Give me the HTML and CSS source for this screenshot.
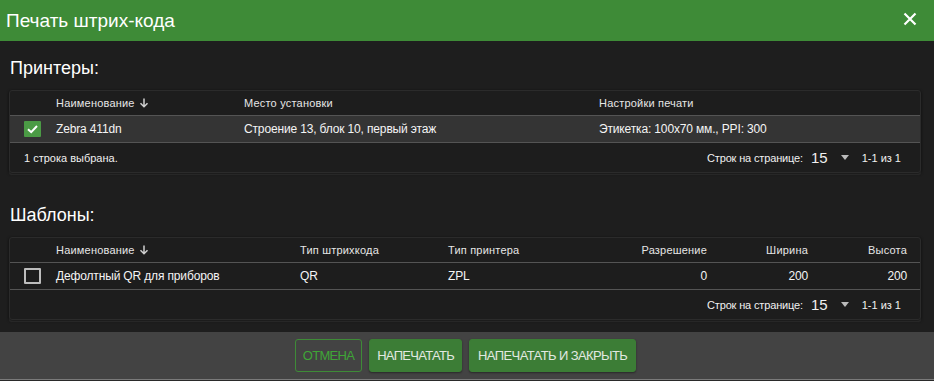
FILE: index.html
```html
<!DOCTYPE html>
<html lang="ru">
<head>
<meta charset="utf-8">
<title>Печать штрих-кода</title>
<link rel="stylesheet" href="styles.css">
</head>
<body>
<div class="dialog">
  <header class="dlg-head">
    <h1 class="dlg-title">Печать штрих-кода</h1>
    <button class="close" aria-label="Закрыть">
      <svg width="14" height="14" viewBox="0 0 14 14"><path d="M1.5 1.5 L12.5 12.5 M12.5 1.5 L1.5 12.5" stroke="#fff" stroke-width="2.2" fill="none"/></svg>
    </button>
  </header>
  <main class="dlg-body">
    <h2 class="section-title">Принтеры:</h2>
    <section class="card">
      <div class="grid g1 thead">
        <div></div>
        <div class="sorted">Наименование <svg class="sort" width="10" height="10" viewBox="0 0 10 10"><path d="M5 0.5 V8.5 M1.5 5.2 L5 8.7 L8.5 5.2" stroke="#cfcfcf" stroke-width="1.5" fill="none"/></svg></div>
        <div>Место установки</div>
        <div>Настройки печати</div>
      </div>
      <div class="grid g1 trow selected">
        <div><span class="cb checked"><svg width="17" height="16" viewBox="0 0 17 16"><path d="M4 8.2 L7.2 11.2 L13 5" stroke="#fff" stroke-width="2" fill="none"/></svg></span></div>
        <div>Zebra 411dn</div>
        <div>Строение 13, блок 10, первый этаж</div>
        <div>Этикетка: 100x70 мм., PPI: 300</div>
      </div>
      <div class="tfoot">
        <span class="sel">1 строка выбрана.</span>
        <div class="pager">
          <span class="lbl">Строк на странице:</span>
          <span class="num">15</span>
          <span class="caret"></span>
          <span class="range">1-1 из 1</span>
        </div>
      </div>
    </section>

    <h2 class="section-title second">Шаблоны:</h2>
    <section class="card">
      <div class="grid g2 thead">
        <div></div>
        <div class="sorted">Наименование <svg class="sort" width="10" height="10" viewBox="0 0 10 10"><path d="M5 0.5 V8.5 M1.5 5.2 L5 8.7 L8.5 5.2" stroke="#cfcfcf" stroke-width="1.5" fill="none"/></svg></div>
        <div>Тип штрихкода</div>
        <div>Тип принтера</div>
        <div class="r">Разрешение</div>
        <div class="r">Ширина</div>
        <div class="r">Высота</div>
      </div>
      <div class="grid g2 trow">
        <div><span class="cb"></span></div>
        <div>Дефолтный QR для приборов</div>
        <div>QR</div>
        <div>ZPL</div>
        <div class="r">0</div>
        <div class="r">200</div>
        <div class="r">200</div>
      </div>
      <div class="tfoot">
        <span class="sel"></span>
        <div class="pager">
          <span class="lbl">Строк на странице:</span>
          <span class="num">15</span>
          <span class="caret"></span>
          <span class="range">1-1 из 1</span>
        </div>
      </div>
    </section>
  </main>
  <footer class="dlg-foot">
    <button class="btn outline">ОТМЕНА</button>
    <button class="btn">НАПЕЧАТАТЬ</button>
    <button class="btn wide">НАПЕЧАТАТЬ И ЗАКРЫТЬ</button>
  </footer>
  <div class="behind"></div>
</div>
</body>
</html>
```

FILE: styles.css
```css
* { box-sizing: border-box; }
html, body {
  margin: 0;
  padding: 0;
  background: #1e1e1e;
  font-family: "Liberation Sans", Arial, sans-serif;
  color: #f2f2f2;
}
.dialog {
  width: 934px;
  height: 381px;
  overflow: hidden;
  display: flex;
  flex-direction: column;
}
.dlg-head {
  height: 41px;
  flex: none;
  background: #3e8b37;
  display: flex;
  align-items: center;
  justify-content: space-between;
  padding: 0 17px 0 6px;
}
.dlg-title {
  margin: 0;
  font-size: 19px;
  font-weight: normal;
  color: #fff;
  line-height: 24px;
}
.close {
  border: 0;
  background: none;
  padding: 0;
  width: 14px;
  height: 14px;
  display: flex;
  margin-top: -4px;
}
.dlg-body {
  flex: none;
  height: 291px;
  background: #1e1e1e;
  padding: 17px 13px 0 9px;
}
.section-title {
  margin: 0 0 12px 1px;
  font-size: 18px;
  font-weight: normal;
  line-height: 20px;
  color: #fff;
}
.section-title.second { margin-top: 32px; }
.card {
  border: 1px solid #2b2b2b;
  border-radius: 3px;
  background: #1d1d1d;
  box-shadow: 0 1px 3px rgba(0,0,0,0.8), 0 2px 1px #3a3a3a;
}
.grid {
  display: grid;
  align-items: center;
}
.g1 { grid-template-columns: 46px 188px 355px 1fr; }
.g2 { grid-template-columns: 46px 244px 148px 1fr 107px 101px 99px; padding-right: 13px; }
.r { text-align: right; }
.thead {
  height: 25px;
  font-size: 11px;
  color: #e6e6e6;
  border-bottom: 1px solid #545454;
  letter-spacing: 0.2px;
}
.sorted { display: flex; align-items: center; }
.sort { margin-left: 4px; display: block; }
.trow {
  height: 27px;
  font-size: 12px;
  color: #f4f4f4;
  border-bottom: 1px solid #545454;
  letter-spacing: -0.15px;
}
.trow.selected { background: #343434; }
.cb {
  display: block;
  width: 17px;
  height: 16px;
  margin-left: 14px;
  border: 2px solid #bdbdbd;
  border-radius: 1px;
}
.cb.checked {
  border: 0;
  background: #4b9b45;
}
.cb svg { display: block; }
.tfoot {
  height: 29px;
  display: flex;
  align-items: center;
  justify-content: space-between;
  padding: 0 19px 0 14px;
  font-size: 11px;
  color: #f0f0f0;
}
.pager {
  display: flex;
  align-items: center;
}
.lbl { letter-spacing: -0.15px; }
.num {
  font-size: 15px;
  margin-left: 8px;
}
.caret {
  width: 0;
  height: 0;
  border-left: 4.5px solid transparent;
  border-right: 4.5px solid transparent;
  border-top: 5px solid #bbb;
  margin-left: 13px;
}
.range { margin-left: 13px; }
.dlg-foot {
  flex: none;
  height: 47px;
  background: #434343;
  display: flex;
  align-items: center;
  justify-content: center;
  gap: 7px;
  padding-right: 3px;
  padding-bottom: 1px;
}
.btn {
  height: 33px;
  padding: 0 7px;
  border: 1px solid #3b7e35;
  border-radius: 3px;
  background: #3c7d36;
  color: #e2e9e1;
  font-family: "Liberation Sans", Arial, sans-serif;
  font-size: 13px;
  letter-spacing: -0.7px;
  box-shadow: 0 1px 2px rgba(0,0,0,0.4);
}
.btn.wide { padding: 0 8px; letter-spacing: -0.6px; }
.btn.outline {
  background: transparent;
  color: #3fa537;
  border-color: #3e8b37;
  box-shadow: none;
}
.behind {
  flex: none;
  height: 2px;
  border-top: 1px solid #7a7a7a;
  background: #2a2a2a;
}
```
